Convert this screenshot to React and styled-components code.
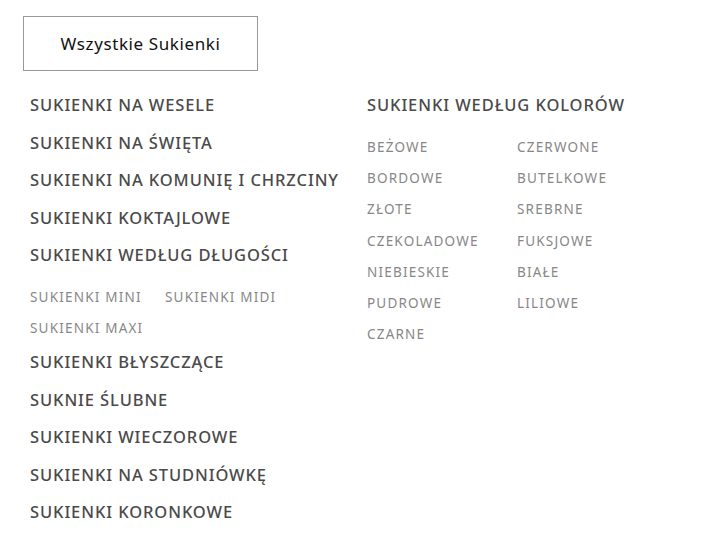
import React from 'react';
import styled, { createGlobalStyle } from 'styled-components';

const GlobalStyle = createGlobalStyle`
  body {
    margin: 0;
    background: #fff;
    font-family: 'Noto Sans', 'Open Sans', 'Liberation Sans', sans-serif;
  }
`;

const Page = styled.div`
  width: 709px;
  height: 538px;
  box-sizing: border-box;
  padding: 16px 0 0 23px;
`;

const AllButton = styled.div`
  width: 235px;
  height: 55px;
  box-sizing: border-box;
  border: 1px solid #999;
  display: flex;
  align-items: center;
  justify-content: center;
  font-size: 17px;
  color: #111;
  letter-spacing: 0.6px;
`;

const Columns = styled.div`
  display: flex;
  padding: 24px 0 0 7px;
`;

const LeftColumn = styled.div`
  width: 337px;
`;

const RightColumn = styled.div`
  width: 300px;
`;

const Heading = styled.div`
  font-size: 16.5px;
  line-height: 20px;
  height: 20px;
  font-weight: 500;
  color: #4a4a4a;
  letter-spacing: 0.9px;
  white-space: nowrap;
  margin-bottom: ${(p) => p.$gap || 17.5}px;
`;

const SubList = styled.div`
  display: flex;
  flex-wrap: wrap;
  row-gap: 13px;
  width: 280px;
  margin-bottom: 15px;
`;

const SubItem = styled.div`
  font-size: 13.5px;
  line-height: 18px;
  color: #878787;
  letter-spacing: 1.2px;
  white-space: nowrap;
  width: ${(p) => p.$width || 'auto'};
`;

const ColorGrid = styled.div`
  display: grid;
  grid-template-columns: 150px 150px;
  row-gap: 13.2px;
`;

const leftTop = [
  'SUKIENKI NA WESELE',
  'SUKIENKI NA ŚWIĘTA',
  'SUKIENKI NA KOMUNIĘ I CHRZCINY',
  'SUKIENKI KOKTAJLOWE',
];

const leftBottom = [
  'SUKIENKI BŁYSZCZĄCE',
  'SUKNIE ŚLUBNE',
  'SUKIENKI WIECZOROWE',
  'SUKIENKI NA STUDNIÓWKĘ',
  'SUKIENKI KORONKOWE',
];

const colors = [
  'BEŻOWE', 'CZERWONE',
  'BORDOWE', 'BUTELKOWE',
  'ZŁOTE', 'SREBRNE',
  'CZEKOLADOWE', 'FUKSJOWE',
  'NIEBIESKIE', 'BIAŁE',
  'PUDROWE', 'LILIOWE',
  'CZARNE',
];

export default function App() {
  return (
    <Page>
      <GlobalStyle />
      <AllButton>Wszystkie Sukienki</AllButton>
      <Columns>
        <LeftColumn>
          {leftTop.map((t) => (
            <Heading key={t}>{t}</Heading>
          ))}
          <Heading $gap={23}>SUKIENKI WEDŁUG DŁUGOŚCI</Heading>
          <SubList>
            <SubItem $width="135px">SUKIENKI MINI</SubItem>
            <SubItem>SUKIENKI MIDI</SubItem>
            <SubItem $width="135px">SUKIENKI MAXI</SubItem>
          </SubList>
          {leftBottom.map((t) => (
            <Heading key={t}>{t}</Heading>
          ))}
        </LeftColumn>
        <RightColumn>
          <Heading $gap={23}>SUKIENKI WEDŁUG KOLORÓW</Heading>
          <ColorGrid>
            {colors.map((c) => (
              <SubItem key={c}>{c}</SubItem>
            ))}
          </ColorGrid>
        </RightColumn>
      </Columns>
    </Page>
  );
}
